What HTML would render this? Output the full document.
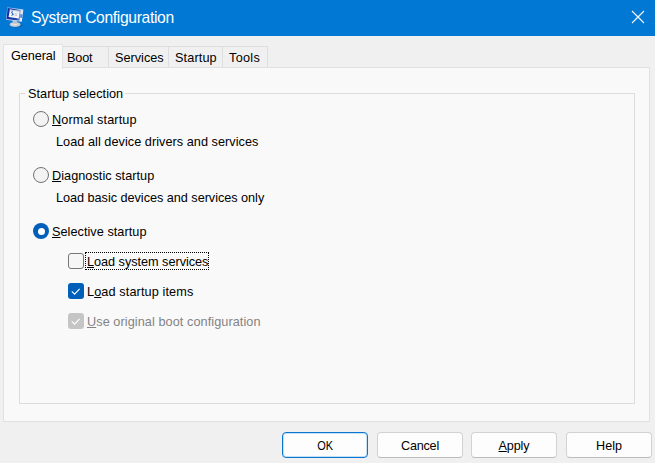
<!DOCTYPE html>
<html><head><meta charset="utf-8"><title>System Configuration</title>
<style>
*{box-sizing:border-box;margin:0;padding:0}
html,body{width:655px;height:463px;overflow:hidden;background:#f0f0f0;font-family:"Liberation Sans",sans-serif;font-size:13px;color:#000}
.abs{position:absolute}
#title{left:0;top:0;width:655px;height:36px;background:#0078d4}
#title .t{left:31px;top:7.5px;font-size:15.7px;letter-spacing:-0.36px;color:#fff;white-space:nowrap;line-height:20px}
.tab{position:absolute;top:46px;height:22px;background:#f0f0f0;border:1px solid #dedede;border-bottom:none;font-size:12.7px;line-height:22px;padding-left:6px;white-space:nowrap}
.tab.sel{top:44px;height:25px;background:#f9f9f9;z-index:3;border-color:#e3e3e3}
#pane{left:3px;top:67px;width:647px;height:355px;background:#f9f9f9;border:1px solid #e0e0e0;z-index:2}
#group{left:19px;top:93px;width:616px;height:311px;border:1px solid #dcdcdc;z-index:4}
.lbl{position:absolute;white-space:nowrap;font-size:12.7px;letter-spacing:0.04px;line-height:16px;z-index:5;margin-top:1px}
.radio{position:absolute;width:16px;height:16px;border-radius:50%;border:1px solid #727272;background:#f3f3f3;z-index:5}
.radio.on{border:none;background:#005fb8}
.radio.on::after{content:"";position:absolute;left:4.5px;top:4.5px;width:7px;height:7px;border-radius:50%;background:#fff}
.cb{position:absolute;width:16px;height:16px;border-radius:3px;border:1px solid #767676;background:#f6f6f6;z-index:5}
.cb.on{border:none;background:#005fb8}
.cb.dis{border:none;background:#c5c5c5}
.cb svg{position:absolute;left:0;top:0}
.btn{position:absolute;top:432px;height:26px;width:86px;border:1px solid #d2d2d2;border-bottom-color:#bcbcbc;border-radius:4px;background:#fdfdfd;text-align:center;font-size:12.6px;line-height:26px}
.btn.def{border:1px solid #0875d0;border-bottom-color:#0875d0;box-shadow:inset 0 0 0 1px rgba(0,120,212,0.22)}
u{text-decoration:underline;text-underline-offset:0.5px}
</style></head><body>
<div id="title" class="abs">
<svg class="abs" style="left:0;top:0" width="32" height="36" viewBox="0 0 32 36">
<defs>
<linearGradient id="scr" x1="0" y1="0" x2="1" y2="0"><stop offset="0" stop-color="#14289a"/><stop offset="0.7" stop-color="#2448b4"/><stop offset="1" stop-color="#7fa2e6"/></linearGradient>
<linearGradient id="bez" x1="0" y1="0" x2="1" y2="1"><stop offset="0" stop-color="#8fa8dc"/><stop offset="0.6" stop-color="#dfe6f4"/><stop offset="1" stop-color="#eef1f6"/></linearGradient>
<radialGradient id="base" cx="0.45" cy="0.4" r="0.7"><stop offset="0" stop-color="#eceef0"/><stop offset="1" stop-color="#aeb4bc"/></radialGradient>
</defs>
<ellipse cx="16.8" cy="25.2" rx="6" ry="2.2" fill="#0a5aa8" opacity="0.5"/>
<ellipse cx="15.1" cy="24.5" rx="5.5" ry="2.6" fill="url(#base)"/>
<polygon points="12.8,20.2 17.2,20.8 17,24 12.6,23.4" fill="#bcc2cc"/>
<polygon points="7.3,7.3 23.4,9.6 21.8,21.8 6.1,19.7" fill="url(#bez)"/>
<polygon points="7.7,7.9 20.6,9.9 19.6,20.7 6.6,19" fill="url(#scr)"/>
<polygon points="20.4,14 22.6,14.4 22.2,18 20,17.6" fill="#5f86dc"/>
<polygon points="9.9,9.4 19.6,10.9 18.8,18.4 8.6,16.9" fill="#f4f6f8"/>
<polygon points="9.9,9.4 19.6,10.9 19.45,12 9.75,10.5" fill="#c4ccd8"/>
<path d="M12.6 11.2 q-1.7 1 -0.2 2.1 q1.2 1 -0.9 2.3" stroke="#2a62d0" stroke-width="1.1" fill="none"/>
<circle cx="13.5" cy="14.3" r="0.6" fill="#35a83c"/>
<path d="M14.8 13.4 l2.6 0.4 M14.6 15.2 l2.6 0.4" stroke="#9aa2ae" stroke-width="0.6"/>
</svg>
<div class="abs t">System Configuration</div>
<svg class="abs" style="left:631px;top:10px" width="14" height="14" viewBox="0 0 14 14"><path d="M1 1 L13 13 M13 1 L1 13" stroke="#fff" stroke-width="1.1" fill="none"/></svg>
</div>

<div class="tab sel" style="left:3px;width:60px;padding-left:7px;line-height:23px;letter-spacing:-0.1px">General</div>
<div class="tab" style="left:62px;width:47px;padding-left:4px;letter-spacing:-0.15px">Boot</div>
<div class="tab" style="left:108px;width:61px">Services</div>
<div class="tab" style="left:168px;width:55px;letter-spacing:0.12px">Startup</div>
<div class="tab" style="left:222px;width:46px;letter-spacing:0.3px">Tools</div>

<div id="pane" class="abs"></div>
<div id="group" class="abs"></div>
<div class="lbl" style="left:25px;top:85px;background:#f9f9f9;padding:0 2px 0 3px">Startup selection</div>

<div class="radio" style="left:33px;top:111px"></div>
<div class="lbl" style="left:52px;top:111px;letter-spacing:0.1px"><u>N</u>ormal startup</div>
<div class="lbl" style="left:56px;top:133px">Load all device drivers and services</div>

<div class="radio" style="left:33px;top:167px"></div>
<div class="lbl" style="left:52px;top:167px"><u>D</u>iagnostic startup</div>
<div class="lbl" style="left:56px;top:189px;letter-spacing:-0.035px">Load basic devices and services only</div>

<div class="radio on" style="left:33px;top:223px"></div>
<div class="lbl" style="left:52px;top:223px"><u>S</u>elective startup</div>

<div class="cb" style="left:68px;top:253px"></div>
<div class="lbl" style="left:87px;top:253px;letter-spacing:-0.03px"><u>L</u>oad system services</div>
<div class="abs" style="left:85px;top:252px;width:124px;height:18px;border:1px dotted #000;z-index:6"></div>

<div class="cb on" style="left:68px;top:283px"><svg width="16" height="16" viewBox="0 0 16 16"><path d="M3.8 8.4 L6.6 11.1 L11.6 5.8" stroke="#fff" stroke-width="1.1" fill="none"/></svg></div>
<div class="lbl" style="left:87px;top:283px;letter-spacing:0.11px">L<u>o</u>ad startup items</div>

<div class="cb dis" style="left:68px;top:313px"><svg width="16" height="16" viewBox="0 0 16 16"><path d="M3.8 8.4 L6.6 11.1 L11.6 5.8" stroke="#fff" stroke-width="1.1" fill="none"/></svg></div>
<div class="lbl" style="left:87px;top:313px;color:#838383;letter-spacing:0.07px"><u>U</u>se original boot configuration</div>

<div class="btn def" style="left:282px"><span style="display:inline-block;transform:scaleX(0.87)">OK</span></div>
<div class="btn" style="left:377px;letter-spacing:-0.2px">Cancel</div>
<div class="btn" style="left:471px;letter-spacing:-0.1px"><u>A</u>pply</div>
<div class="btn" style="left:566px">Help</div>
</body></html>
